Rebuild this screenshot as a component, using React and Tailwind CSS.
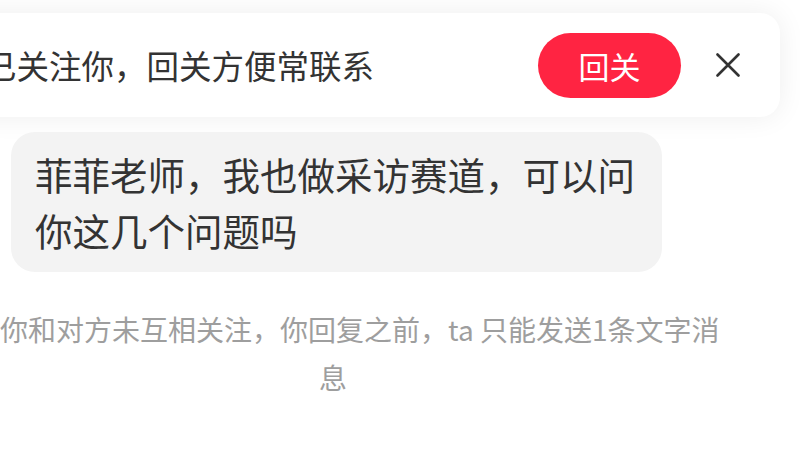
import React from "react";

const CloseIcon = () => (
  <svg width="24" height="24" viewBox="0 0 24 24" fill="none">
    <path d="M1.5 1.5L22.5 22.5M22.5 1.5L1.5 22.5" stroke="#333333" strokeWidth="2.6" strokeLinecap="round" />
  </svg>
);

const FollowBar = () => (
  <div className="ml-[-40px] w-[820px] h-[104px] rounded-[20px] bg-white shadow-[0_0_28px_rgba(0,0,0,0.07)] flex items-center pl-[24px] pr-[40px]">
    <span className="text-[32.5px] leading-none text-[#333333] whitespace-nowrap">已关注你，回关方便常联系</span>
    <div className="flex-1" />
    <button className="w-[143px] h-[65px] rounded-full bg-[#ff2442] text-white text-[31px] leading-none flex items-center justify-center">
      回关
    </button>
    <div className="ml-[35px] flex items-center">
      <CloseIcon />
    </div>
  </div>
);

export default function App() {
  return (
    <div className="w-[800px] h-[468px] overflow-hidden bg-white flex flex-col pt-[13px] font-['Noto_Sans_CJK_SC','Noto_Sans',sans-serif]">
      <FollowBar />
      <div className="mt-[15px] ml-[11px] w-[651px] rounded-[24px] bg-[#f3f3f3] px-6 py-[14px] text-[37.5px] leading-[56px] text-[#333333]">
        菲菲老师，我也做采访赛道，可以问你这几个问题吗
      </div>
      <div className="mt-[33px] text-[28px] leading-[48px] text-[#9e9e9e]">
        <div className="whitespace-nowrap">你和对方未互相关注，你回复之前，ta 只能发送1条文字消</div>
        <div className="w-[666px] text-center">息</div>
      </div>
    </div>
  );
}
